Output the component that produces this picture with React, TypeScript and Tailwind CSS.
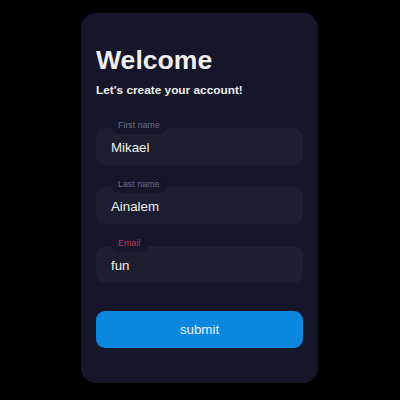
import React from "react";

function Field({
  value,
  label,
  cutW,
  labelColor,
  className,
}: {
  value: string;
  label: string;
  cutW: string;
  labelColor: string;
  className: string;
}) {
  return (
    <div className={"relative h-[37px] " + className}>
      <div className="flex h-full w-full items-center rounded-[9px] bg-[#1d1e30] pl-[15px] pt-[3px] text-[13.3px] text-[#eeeeee]">
        {value}
      </div>
      <div className={"absolute left-[15px] top-[-9px] h-[15px] rounded-[7.5px] bg-[#15162a] " + cutW} />
      <div className={"absolute left-[22px] top-[-8.5px] whitespace-nowrap text-[8.9px] leading-[10px] " + labelColor}>
        {label}
      </div>
    </div>
  );
}

export default function App() {
  return (
    <div className="flex h-[400px] w-[400px] justify-start bg-black pl-[81px] pt-[13px] font-['Liberation_Sans',Arial,sans-serif]">
      <div className="h-[370px] w-[237px] rounded-[15px] bg-[#15162a] p-[15px]">
        <div className="mt-[17px] text-[26.6px] font-bold leading-[31px] text-[#eeeeee]">Welcome</div>
        <div className="mt-[7px] text-[11.84px] font-bold leading-[14px] text-[#eeeeee]">
          Let's create your account!
        </div>
        <Field className="mt-[31px]" value="Mikael" label="First name" cutW="w-[56px]" labelColor="text-[#6c6c82]" />
        <Field className="mt-[22px]" value="Ainalem" label="Last name" cutW="w-[56px]" labelColor="text-[#6c6c82]" />
        <Field className="mt-[22px]" value="fun" label="Email" cutW="w-[37px]" labelColor="text-[#c42a4e]" />
        <button className="mt-[28px] flex h-[37px] w-full items-center justify-center rounded-[9px] bg-[#0b88de] text-[13.3px] text-[#eeeeee]">
          submit
        </button>
      </div>
    </div>
  );
}
